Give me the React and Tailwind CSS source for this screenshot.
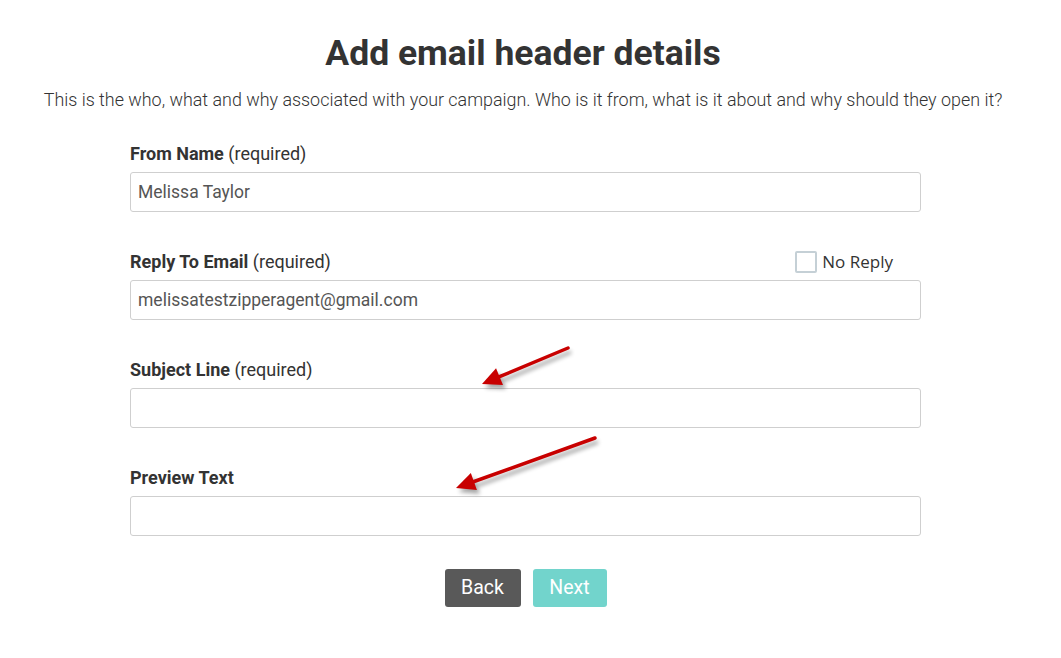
import React from 'react';

const Field = ({ label, required, value, extra }) => (
  <div>
    <div className="flex items-end justify-between mb-[7px]">
      <label className="text-[18px] leading-[22px] text-[#333]">
        <span className="font-bold">{label}</span>
        {required && <span> (required)</span>}
      </label>
      {extra}
    </div>
    <div className="h-[40px] border border-[#cfcfcf] rounded-[3px] px-[7px] flex items-center text-[17.5px] text-[#555]">
      {value}
    </div>
  </div>
);

const Arrow = ({ x1, y1, x2, y2 }) => {
  const dx = x2 - x1;
  const dy = y2 - y1;
  const len = Math.sqrt(dx * dx + dy * dy);
  const ux = dx / len;
  const uy = dy / len;
  const bx = x2 - ux * 19;
  const by = y2 - uy * 19;
  const px = -uy * 9;
  const py = ux * 9;
  const head = `${x2},${y2} ${bx + px},${by + py} ${bx - px},${by - py}`;
  return (
    <g>
      <g transform="translate(3,4)" opacity="0.35" filter="url(#blur)">
        <line x1={x1} y1={y1} x2={bx} y2={by} stroke="#000" strokeWidth="3.5" />
        <polygon points={head} fill="#000" />
      </g>
      <line x1={x1} y1={y1} x2={bx + ux * 2} y2={by + uy * 2} stroke="#c80000" strokeWidth="3.5" strokeLinecap="round" />
      <polygon points={head} fill="#c80000" />
    </g>
  );
};

export default function App() {
  return (
    <div className="relative w-[1061px] h-[658px] bg-white" style={{ fontFamily: 'Roboto, sans-serif' }}>
      <div className="w-[1046px] pt-[30px] text-center">
        <h1 className="text-[35.5px] leading-[46px] font-bold text-[#333]">Add email header details</h1>
        <p className="mt-[12px] text-[17.9px] leading-[24px] font-light text-[#333]">
          This is the who, what and why associated with your campaign. Who is it from, what is it about and why should they open it?
        </p>
      </div>
      <div className="w-[791px] ml-[130px] mt-[31px]">
        <div className="flex flex-col gap-[39px]">
          <Field label="From Name" required value="Melissa Taylor" />
          <Field
            label="Reply To Email"
            required
            value="melissatestzipperagent@gmail.com"
            extra={
              <div className="flex items-center mr-[28px]">
                <span className="w-[22px] h-[22px] border-2 border-[#c5d0d6] rounded-[2px] mr-[5px]" />
                <span className="text-[17px] leading-[22px] text-[#333]" style={{ fontFamily: '"Open Sans", sans-serif' }}>No Reply</span>
              </div>
            }
          />
          <Field label="Subject Line" required value="" />
          <Field label="Preview Text" value="" />
        </div>
        <div className="flex justify-center gap-[12px] mt-[33px]">
          <button className="h-[38px] w-[76px] rounded-[3px] bg-[#595959] text-white text-[19.5px]">Back</button>
          <button className="h-[38px] w-[74px] rounded-[3px] bg-[#72d4cc] text-white text-[19.5px]">Next</button>
        </div>
      </div>
      <svg className="absolute inset-0 pointer-events-none" width="1061" height="658">
        <defs>
          <filter id="blur" x="-20%" y="-20%" width="140%" height="140%">
            <feGaussianBlur stdDeviation="2" />
          </filter>
        </defs>
        <Arrow x1={568} y1={348} x2={482} y2={384} />
        <Arrow x1={595} y1={438} x2={456} y2={488} />
      </svg>
    </div>
  );
}
